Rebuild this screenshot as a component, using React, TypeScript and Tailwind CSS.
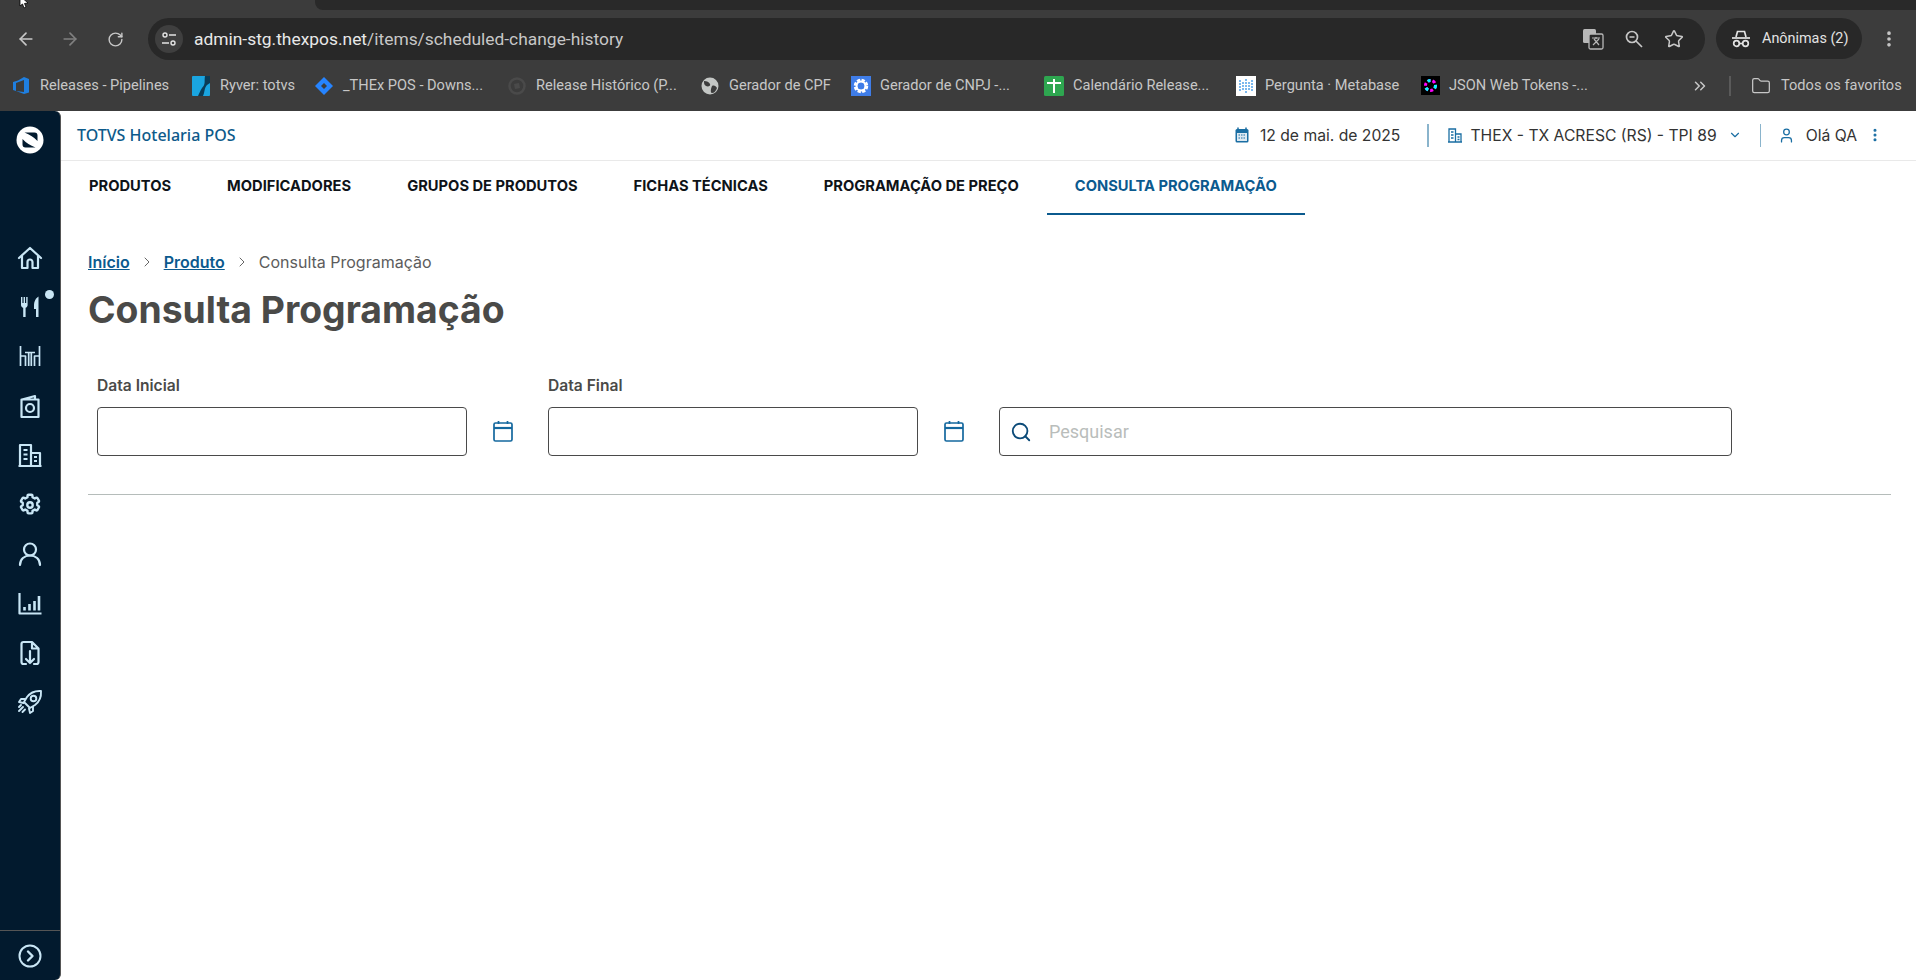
import React from "react";
import { ArrowLeft, ArrowRight, RotateCw, Star, ChevronsRight, Folder, ChevronDown, ChevronRight, Search, EllipsisVertical, User } from "lucide-react";

const ic = "#c9e6f5";

function Logo() {
  return (
    <svg width="28" height="28" viewBox="0 0 28 28">
      <circle cx="14" cy="14" r="13.500" fill="#fff" />
      <path d="M8.500 6.500 H18.500 Q21.500 6.500 21.500 9.500 V15 Q16.500 9.500 8.500 6.500 Z" fill="#021a2e" />
      <path d="M19.500 21.500 H9.500 Q6.500 21.500 6.500 18.500 V13 Q11.500 18.500 19.500 21.500 Z" fill="#021a2e" />
    </svg>
  );
}

const S = { fill: "none", stroke: ic, strokeWidth: 2.2, strokeLinecap: "round" as const, strokeLinejoin: "round" as const };

const icons: React.ReactNode[] = [
  <svg key="h" width="26" height="26" viewBox="0 0 26 26" {...S}><path d="M2 13 13 3l11 10M5 11v12h5.500v-6a2.500 2.500 0 0 1 5 0v6H21V11" /></svg>,
  <svg key="f" width="26" height="26" viewBox="0 0 26 26" fill={ic}><path d="M4 3h1.400v6h1.200V3H8v6h1.200V3h1.400v8c0 1.600-1 2.400-2 2.700V23H6.200v-9.300c-1.200-.3-2.200-1.100-2.200-2.700Z" /><path d="M17 12c0-5 2-8 4.500-9.500V23h-2.500v-8h-2Z" /></svg>,
  <svg key="t" width="26" height="26" viewBox="0 0 26 26" {...S} strokeWidth={1.700} strokeLinecap="butt"><path d="M3.500 3v20M3.500 13h5v10M22.500 3v20M22.500 13h-5v10M8 9.500h10M11.700 9.500V23M14.300 9.500V23" /></svg>,
  <svg key="c" width="26" height="26" viewBox="0 0 26 26" {...S}><path d="M5 6.500 18 3v3.500M4.500 6.500h17V24h-17Z" /><circle cx="13" cy="15" r="4" /></svg>,
  <svg key="b" width="26" height="26" viewBox="0 0 26 26" {...S} strokeLinecap="butt"><path d="M3 24V3h11v21ZM14 11h9v13h-9ZM1.500 24h23M6.500 8h4M6.500 12.500h4M6.500 17h4M17 15h3M17 19h3" /></svg>,
  <svg key="g" width="26" height="26" viewBox="0 0 24 24" {...S}><path d="M9.700 3.500a1 1 0 0 1 1-1h2.600a1 1 0 0 1 1 1v1.300l2.100 1.200 1.100-.7a1 1 0 0 1 1.400.4l1.300 2.200a1 1 0 0 1-.4 1.400l-1.100.6v2.400l1.100.6a1 1 0 0 1 .4 1.400l-1.300 2.200a1 1 0 0 1-1.400.4l-1.100-.7-2.100 1.200v1.300a1 1 0 0 1-1 1h-2.600a1 1 0 0 1-1-1v-1.300l-2.100-1.200-1.100.7a1 1 0 0 1-1.400-.4l-1.300-2.200a1 1 0 0 1 .4-1.400l1.100-.6v-2.400l-1.100-.6a1 1 0 0 1-.4-1.400l1.300-2.200a1 1 0 0 1 1.400-.4l1.100.7 2.100-1.200Z" /><circle cx="12" cy="12" r="2.500" /></svg>,
  <svg key="u" width="26" height="26" viewBox="0 0 26 26" {...S}><circle cx="13" cy="8.500" r="6" /><path d="M3 24c0-6 4.500-9.500 10-9.500S23 18 23 24" /></svg>,
  <svg key="ch" width="26" height="26" viewBox="0 0 26 26" {...S} strokeLinecap="butt"><path d="M2.500 3v20.500h22" /><path d="M7.500 17v3.500M12.500 14v6.500M17.500 11v9.500M22 6v14.500" strokeWidth={2.600} /></svg>,
  <svg key="fi" width="26" height="26" viewBox="0 0 26 26" {...S}><path d="M9 24H6.500a2 2 0 0 1-2-2V4a2 2 0 0 1 2-2H15l6.500 6.500V22a2 2 0 0 1-2 2H17M15 2.500V8.500h6" /><path d="M13 11v12M9 19l4 4 4-4" /></svg>,
  <svg key="r" width="28" height="28" viewBox="0 0 28 28" {...S} strokeWidth={1.900}><path d="M25 3c-7-.5-11 2-14 6l-3 5 6 6 5-3c4-3 6.500-7 6-14Z" /><circle cx="17.500" cy="10.500" r="2.800" /><path d="M9 11H5l-2 3 4.500 1M17 19v4l-3 2-1-4.500M7 19l-4 4M9 21.500l-2.500 2.500M5 17l-2 2" /></svg>,
];

function Cal() {
  return (
    <svg width="20" height="22" viewBox="0 0 20 22" fill="none" stroke="#14689e" strokeWidth="1.700">
      <rect x="1" y="3" width="18" height="18" rx="1.500" />
      <path d="M1 8h18" strokeWidth="2.200" />
      <path d="M5.500 1v3M14.500 1v3" />
    </svg>
  );
}

const marks: { w: string; t: string; icon: React.ReactNode }[] = [
  { w: "w-[180px]", t: "Releases - Pipelines", icon: <svg width="18" height="18" viewBox="0 0 18 18"><path d="M1 5v8l3 1V6l8-3v12l-8-1 8 3 5-1.500V2L12 0 6 3.500Z" fill="#1f7fe0" /></svg> },
  { w: "w-[123px]", t: "Ryver: totvs", icon: <svg width="18" height="20" viewBox="0 0 18 20"><rect width="18" height="20" rx="1" fill="#1aa5e0" /><path d="M18 0H13C12 5 14 8 10 12 8 15 7 18 6 20h5c2-4 1-8 4-11l3-2Z" fill="#0b3b55" /></svg> },
  { w: "w-[193px]", t: "_THEx POS - Downs...", icon: <svg width="18" height="20" viewBox="0 0 18 20"><path d="M9 1 18 10 9 19 0 10Z" fill="#2684ff" /><path d="M9 7 12 10 9 13 6 10Z" fill="#3c3c3c" /></svg> },
  { w: "w-[193px]", t: "Release Histórico (P...", icon: <svg width="18" height="18" viewBox="0 0 18 18"><circle cx="9" cy="9" r="7.500" fill="none" stroke="#4a4a4a" strokeWidth="2.500" /><path d="M6 7l5-1 1 5-5 1Z" fill="#4a4a4a" /></svg> },
  { w: "w-[151px]", t: "Gerador de CPF", icon: <svg width="18" height="18" viewBox="0 0 18 18"><circle cx="9" cy="9" r="8.500" fill="#c4c7c5" /><path d="M3 4c3 0 5 1 6 3S7 10 5 9 3 6 3 4ZM11 9c2-1 4 0 5 2-1 3-3 5-5 5s-1-5 0-7Z" fill="#3c3c3c" /></svg> },
  { w: "w-[193px]", t: "Gerador de CNPJ -...", icon: <svg width="20" height="20" viewBox="0 0 20 20"><rect width="20" height="20" fill="#3f7de8" /><circle cx="10" cy="10" r="5.500" fill="none" stroke="#fff" strokeWidth="3.500" strokeDasharray="3 1.300" /><circle cx="10" cy="10" r="4.500" fill="none" stroke="#fff" strokeWidth="2" /></svg> },
  { w: "w-[192px]", t: "Calendário Release...", icon: <svg width="20" height="20" viewBox="0 0 20 20"><rect width="20" height="20" rx="1.500" fill="#2ea650" /><path d="M3 7h14M10 3v14" stroke="#fff" strokeWidth="2" /></svg> },
  { w: "w-[184px]", t: "Pergunta · Metabase", icon: <svg width="20" height="20" viewBox="0 0 20 20"><rect width="20" height="20" fill="#fff" /><path d="M4 4v12M7 6v8M10 3v14M13 6v8M16 4v12" stroke="#7ab8ee" strokeWidth="2" strokeDasharray="2 1" /></svg> },
  { w: "w-[271px]", t: "JSON Web Tokens -...", icon: <svg width="19" height="19" viewBox="0 0 19 19"><rect width="19" height="19" fill="#000" /><circle cx="9.500" cy="9.500" r="5" fill="none" stroke="#f0f" strokeWidth="3" strokeDasharray="3 2" /><circle cx="9.500" cy="9.500" r="5" fill="none" stroke="#0ff" strokeWidth="3" strokeDasharray="3 7" /><circle cx="9.500" cy="9.500" r="2" fill="#000" /></svg> },
];

const tabs = ["PRODUTOS", "MODIFICADORES", "GRUPOS DE PRODUTOS", "FICHAS TÉCNICAS", "PROGRAMAÇÃO DE PREÇO"];

function DateField({ label }: { label: string }) {
  return (
    <div className="flex items-end">
      <div className="w-[370px]">
        <div className="h-[22px] mb-[10px] text-[15.600px] leading-[22px] font-semibold text-[#4a4a48]">{label}</div>
        <div className="h-[49px] rounded-[4px] border border-[#4a4a4a] bg-white" />
      </div>
      <div className="h-[49px] flex items-center pb-[2px] ml-[26px] mr-[35px] w-[20px]"><Cal /></div>
    </div>
  );
}

export default function App() {
  return (
    <div className="w-[1916px] h-[980px] overflow-hidden flex flex-col bg-white font-['Inter',sans-serif]">
      <div className="h-[111px] shrink-0 bg-[#3c3c3c] flex flex-col font-['Roboto',sans-serif]">
        <div className="h-[10px] relative">
          <div className="absolute left-[315px] right-0 top-0 h-[10px] bg-[#292929] rounded-bl-[8px]" />
          <svg className="absolute left-[18px] top-0" width="12" height="9" viewBox="0 0 12 9"><path d="M2 -4 2 6 4.500 4 6 8 8 7 6.500 3.500 10 3Z" fill="#fff" stroke="#000" strokeWidth="0.800" /></svg>
        </div>
        <div className="h-[50px] flex items-start pt-[8px]">
          <div className="w-[148px] h-[42px] flex items-center text-[#c7c7c7]">
            <ArrowLeft size={20} className="ml-[16px]" strokeWidth={2} />
            <ArrowRight size={20} className="ml-[24px] text-[#808080]" strokeWidth={2} />
            <RotateCw size={17} className="ml-[27px]" strokeWidth={2} />
          </div>
          <div className="w-[1557px] h-[42px] rounded-full bg-[#282828] flex items-center">
            <div className="ml-[7px] w-[28px] h-[28px] rounded-full bg-[#3f3f3f] flex items-center justify-center">
              <svg width="16" height="16" viewBox="0 0 16 16" fill="none" stroke="#e3e3e3" strokeWidth="1.400"><circle cx="4" cy="4" r="2" /><path d="M8 4h7M1 12h7" /><circle cx="12" cy="12" r="2" /></svg>
            </div>
            <div className="ml-[11px] text-[17.400px] leading-[20px] text-[#c7c7c7] whitespace-nowrap"><span className="text-[#e8e8e8]">admin-stg.thexpos.net</span>/items/scheduled-change-history</div>
            <div className="ml-auto flex items-center text-[#c7c7c7]">
              <svg width="22" height="22" viewBox="0 0 22 22"><rect x="1" y="1" width="13" height="14" rx="1.500" fill="#b8b8b8" /><rect x="7" y="6" width="14" height="15" rx="1.500" fill="#282828" stroke="#b8b8b8" strokeWidth="1.300" /><path d="M10 10h8M14 9v2M11 17l6-6M12 11l5 6" stroke="#b8b8b8" strokeWidth="1.200" fill="none" /></svg>
              <svg width="20" height="20" viewBox="0 0 20 20" fill="none" stroke="#c7c7c7" strokeWidth="1.700" className="ml-[20px]"><circle cx="8" cy="8" r="5.500" /><path d="M5.500 8h5M12 12l6 6" /></svg>
              <Star size={20} strokeWidth={1.800} className="ml-[20px] mr-[21px]" />
            </div>
          </div>
          <div className="ml-[11px] w-[146px] h-[41px] rounded-full bg-[#282828] flex items-center text-[#e3e3e3] text-[14.400px]">
            <svg width="20" height="18" viewBox="0 0 20 18" fill="none" stroke="#e3e3e3" strokeWidth="1.700" className="ml-[15px]"><path d="M5 7 6.500 1.500h7L15 7" /><path d="M1 8h18" /><circle cx="5.500" cy="13.500" r="2.800" /><circle cx="14.500" cy="13.500" r="2.800" /><path d="M8 13.500h4" /></svg>
            <span className="ml-[11px] whitespace-nowrap">Anônimas (2)</span>
          </div>
          <div className="w-[54px] h-[42px] flex items-center justify-center text-[#c7c7c7]"><EllipsisVertical size={20} strokeWidth={2.400} /></div>
        </div>
        <div className="h-[50px] flex items-center pl-[11px] pt-[2px] text-[14.600px] text-[#c7c7c7]">
          {marks.map((m) => (
            <div key={m.t} className={`${m.w} shrink-0 flex items-center`}>
              <span className="w-[20px] h-[20px] flex items-center justify-center shrink-0">{m.icon}</span>
              <span className="ml-[9px] whitespace-nowrap">{m.t}</span>
            </div>
          ))}
          <ChevronsRight size={18} strokeWidth={2} />
          <div className="ml-[20px] w-[2px] h-[20px] bg-[#5a5a5a]" />
          <Folder size={20} strokeWidth={1.500} className="ml-[20px]" />
          <span className="ml-[10px] whitespace-nowrap">Todos os favoritos</span>
        </div>
      </div>

      <div className="flex-1 flex min-h-0">
        <div className="w-[61px] shrink-0 bg-[#021a2e] border-r border-[#555] rounded-r-[6px] flex flex-col items-center">
          <div className="h-[43px] w-full flex items-end justify-center pr-[1px]"><Logo /></div>
          <div className="h-[79px]" />
          <div className="w-full flex flex-col pr-[1px]">
            {icons.map((n, i) => (
              <div key={i} className="h-[49.400px] flex items-center justify-center relative">
                {n}
                {i === 1 && <span className="absolute left-[45px] top-[8px] w-[9px] h-[9px] rounded-full bg-[#c9e6f5]" />}
              </div>
            ))}
          </div>
          <div className="mt-auto w-full h-[50px] border-t border-[#555] flex items-center justify-center pr-[1px]">
            <svg width="24" height="24" viewBox="0 0 24 24" fill="none" stroke={ic} strokeWidth="2" strokeLinecap="round" strokeLinejoin="round"><circle cx="12" cy="12" r="10.500" /><path d="m10 7.500 4.500 4.500L10 16.500" strokeWidth="2.400" /></svg>
          </div>
        </div>

        <div className="flex-1 min-w-0 flex flex-col">
          <div className="h-[50px] shrink-0 border-b border-[#e9e9e9] flex items-center pl-[16px]">
            <span className="font-['Noto_Sans',sans-serif] font-medium text-[#0d5a8a] text-[16px] leading-[20px] mb-[2px] whitespace-nowrap">TOTVS Hotelaria POS</span>
            <div className="ml-auto flex items-center text-[#333] text-[15.700px]">
              <svg width="14" height="16" viewBox="0 0 14 16" className="mr-[11px]"><rect x="0.500" y="2" width="13" height="13.500" rx="1.500" fill="#1a6ea3" /><rect x="2" y="6" width="10" height="8" fill="#dce9f2" /><path d="M3 0.500v3M11 0.500v3" stroke="#1a6ea3" strokeWidth="1.500" /><path d="M3.500 8h7M3.500 11h7" stroke="#1a6ea3" strokeWidth="1.200" strokeDasharray="1.500 1" /></svg>
              <span className="whitespace-nowrap">12 de mai. de 2025</span>
              <div className="ml-[27px] w-[2px] h-[23px] bg-[#8ab4cc]" />
              <svg width="14" height="15" viewBox="0 0 14 15" fill="none" stroke="#1a6ea3" strokeWidth="1.300" className="ml-[19px] mr-[8px]"><path d="M1 14V1h6.500v13ZM7.500 6H13v8H7.500ZM0 14h14M3 4h2.500M3 7h2.500M3 10h2.500M9.500 9h2M9.500 11.500h2" /></svg>
              <span className="whitespace-nowrap">THEX - TX ACRESC (RS) - TPI 89</span>
              <ChevronDown size={14} className="ml-[11px] text-[#1a6ea3]" strokeWidth={2} />
              <div className="ml-[18px] w-[1px] h-[23px] bg-[#8ab4cc]" />
              <User size={17} className="ml-[17px] text-[#1a6ea3]" strokeWidth={1.800} />
              <span className="ml-[11px] whitespace-nowrap">Olá QA</span>
              <EllipsisVertical size={16} className="ml-[10px] mr-[33px] text-[#1a6ea3]" strokeWidth={2.600} />
            </div>
          </div>
          <div className="h-[54px] shrink-0 flex items-stretch text-[14.700px] font-bold text-[#0e1318]">
            {tabs.map((t) => (
              <div key={t} className="px-[28px] flex items-center whitespace-nowrap pb-[3px]">{t}</div>
            ))}
            <div className="px-[28px] flex items-center whitespace-nowrap pb-[1px] text-[#0b5a8e] border-b-2 border-[#0b5a8e]">CONSULTA PROGRAMAÇÃO</div>
          </div>
          <div className="pl-[27px] pr-[25px] flex-1">
            <div className="mt-[36px] h-[22px] flex items-center text-[16px] leading-[22px] whitespace-nowrap">
              <span className="font-semibold text-[#0b5a8e] underline">Início</span>
              <ChevronRight size={16} className="mx-[9px] text-[#666]" strokeWidth={1.500} />
              <span className="font-semibold text-[#0b5a8e] underline">Produto</span>
              <ChevronRight size={16} className="mx-[9px] text-[#666]" strokeWidth={1.500} />
              <span className="text-[#5c5c5c]">Consulta Programação</span>
            </div>
            <h1 className="mt-[14px] text-[37.300px] leading-[46px] font-bold text-[#4a4a48] whitespace-nowrap">Consulta Programação</h1>
            <div className="mt-[42px] pl-[9px] flex items-end">
              <DateField label="Data Inicial" />
              <DateField label="Data Final" />
              <div className="w-[733px] h-[49px] rounded-[4px] border border-[#4a4a4a] flex items-center pl-[10px]">
                <Search size={22} className="text-[#0b4a78]" strokeWidth={2} />
                <span className="ml-[17px] font-['Roboto',sans-serif] text-[18px] text-[#b9bdbb]">Pesquisar</span>
              </div>
            </div>
            <div className="mt-[38px] h-[1px] bg-[#b5bcba]" />
          </div>
        </div>
      </div>
    </div>
  );
}
